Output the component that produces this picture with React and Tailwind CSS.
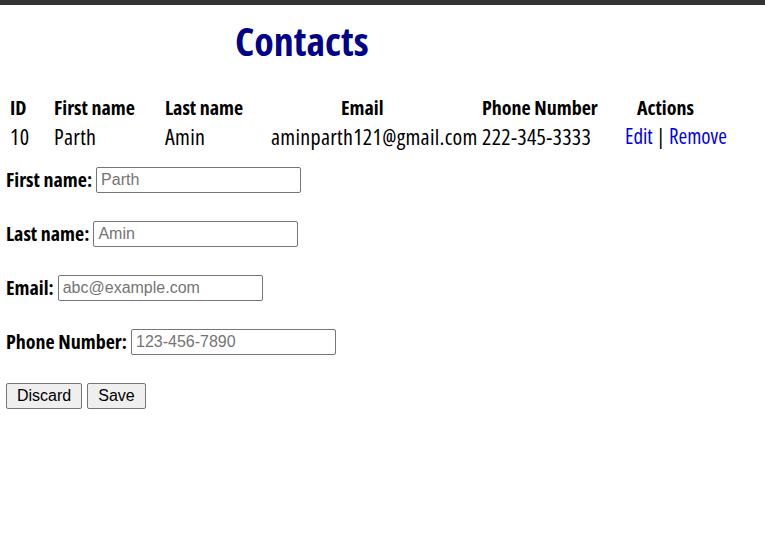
import React from 'react';

const contacts = [
  { id: 10, first: 'Parth', last: 'Amin', email: 'aminparth121@gmail.com', phone: '222-345-3333' },
];

const fields = [
  { label: 'First name:', ph: 'Parth' },
  { label: 'Last name:', ph: 'Amin' },
  { label: 'Email:', ph: 'abc@example.com' },
  { label: 'Phone Number:', ph: '123-456-7890' },
];

const App = () => {
  return (
    <div className="w-[765px] h-[557px] bg-white text-black overflow-hidden whitespace-nowrap font-['Open_Sans',sans-serif] font-stretch-[75%]">
      <div className="h-[5px] bg-[#333333]" />
      <h1 className="pl-[235px] pt-[14px] h-[89px] text-[40px] leading-[44px] font-bold text-[#00008b]">Contacts</h1>

      <div className="grid grid-cols-[44px_111px_106px_211px_143px_110px] pl-[10px] leading-[28px]">
        <div className="font-bold text-[20px]">ID</div>
        <div className="font-bold text-[20px]">First name</div>
        <div className="font-bold text-[20px]">Last name</div>
        <div className="font-bold text-[20px] pl-[70px]">Email</div>
        <div className="font-bold text-[20px]">Phone Number</div>
        <div className="font-bold text-[20px] pl-[12px]">Actions</div>
        {contacts.map(c => (
          <React.Fragment key={c.id}>
            <div className="font-medium text-[22px] tracking-[0.3px]">{c.id}</div>
            <div className="font-medium text-[22px] tracking-[0.3px]">{c.first}</div>
            <div className="font-medium text-[22px] tracking-[0.3px]">{c.last}</div>
            <div className="font-medium text-[22px] tracking-[0.3px]">{c.email}</div>
            <div className="font-medium text-[22px] tracking-[0.3px]">{c.phone}</div>
            <div className="font-medium text-[21px]">
              <a href="#" className="text-[#0000ee]">Edit</a> | <a href="#" className="text-[#0000ee]">Remove</a>
            </div>
          </React.Fragment>
        ))}
      </div>

      <form className="pl-[6px] pt-[17px]">
        {fields.map(f => (
          <div key={f.label} className="h-[54px] flex items-start">
            <label className="text-[20px] leading-[26px] font-bold">{f.label}</label>
            <input
              type="text"
              placeholder={f.ph}
              className="ml-[4px] w-[205px] h-[26px] px-[4px] border border-[#767676] rounded-[2px] text-[16px] placeholder:text-[#757575] font-['Liberation_Sans',Arial,sans-serif] font-stretch-normal"
            />
          </div>
        ))}
        <div className="flex gap-[5px] font-['Liberation_Sans',Arial,sans-serif] font-stretch-normal">
          <button type="button" className="h-[26px] px-[10px] bg-[#efefef] border border-[#767676] rounded-[2px] text-[16px] leading-none">Discard</button>
          <button type="button" className="h-[26px] px-[10px] bg-[#efefef] border border-[#767676] rounded-[2px] text-[16px] leading-none">Save</button>
        </div>
      </form>
    </div>
  );
};

export default App;
